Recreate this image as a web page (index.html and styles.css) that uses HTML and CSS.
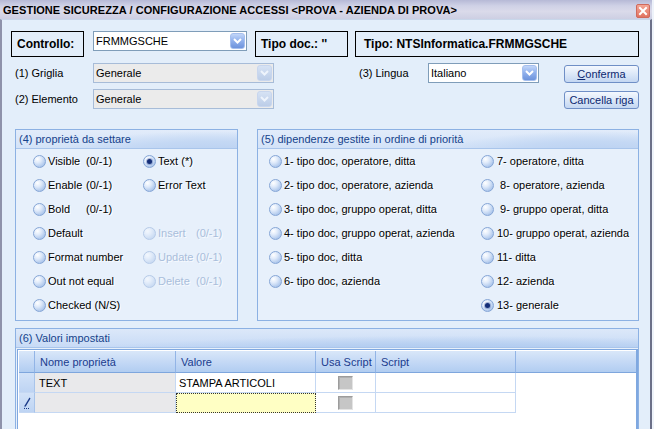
FILE: index.html
```html
<!DOCTYPE html>
<html>
<head>
<meta charset="utf-8">
<link rel="stylesheet" href="styles.css">
</head>
<body>
<div class="window">
  <div class="titlebar">
    <span class="title">GESTIONE SICUREZZA / CONFIGURAZIONE ACCESSI &lt;PROVA - AZIENDA DI PROVA&gt;</span>
    <span class="close">
      <svg width="14" height="14" viewBox="0 0 14 14">
        <defs><linearGradient id="cg" x1="0" y1="0" x2="0" y2="1"><stop offset="0" stop-color="#f4a898"/><stop offset="1" stop-color="#e0705e"/></linearGradient></defs>
        <rect x="0.5" y="0.5" width="13" height="13" rx="1.5" fill="url(#cg)" stroke="#d06a5c"/>
        <path d="M4 4 L10 10 M10 4 L4 10" stroke="#fff" stroke-width="2" stroke-linecap="square"/>
      </svg>
    </span>
  </div>
  <div class="frame">
    <div class="row-top">
      <div class="box box-ctrl">Controllo:</div>
      <div class="combo combo-ctrl"><span class="combo-text">FRMMGSCHE</span><span class="ddbtn"><svg width="9" height="6" viewBox="0 0 9 6"><path d="M1 1 L4.5 4.5 L8 1" fill="none" stroke="#fff" stroke-width="2"/></svg></span></div>
      <div class="box box-tipodoc">Tipo doc.: ''</div>
      <div class="box box-tipo">Tipo: NTSInformatica.FRMMGSCHE</div>
    </div>
    <div class="row-params">
      <div class="params-left">
        <div class="prow"><span class="plabel">(1) Griglia</span><div class="combo combo-dis"><span class="combo-text">Generale</span><span class="ddbtn dd-dis"><svg width="9" height="6" viewBox="0 0 9 6"><path d="M1 1 L4.5 4.5 L8 1" fill="none" stroke="#eef4fc" stroke-width="2"/></svg></span></div></div>
        <div class="prow"><span class="plabel">(2) Elemento</span><div class="combo combo-dis"><span class="combo-text">Generale</span><span class="ddbtn dd-dis"><svg width="9" height="6" viewBox="0 0 9 6"><path d="M1 1 L4.5 4.5 L8 1" fill="none" stroke="#eef4fc" stroke-width="2"/></svg></span></div></div>
      </div>
      <div class="params-lang">
        <span class="llabel">(3) Lingua</span>
        <div class="combo combo-lang"><span class="combo-text">Italiano</span><span class="ddbtn"><svg width="9" height="6" viewBox="0 0 9 6"><path d="M1 1 L4.5 4.5 L8 1" fill="none" stroke="#fff" stroke-width="2"/></svg></span></div>
      </div>
      <div class="params-buttons">
        <div class="btn"><u>C</u>onferma</div>
        <div class="btn">Cancella riga</div>
      </div>
    </div>
    <div class="groups">
      <div class="group group4">
        <div class="ghead">(4) proprietà da settare</div>
        <div class="gbody g4body">
          <div class="col col4a">
            <div class="ritem"><span class="radio"></span><span class="rname">Visible</span><span>(0/-1)</span></div>
            <div class="ritem"><span class="radio"></span><span class="rname">Enable</span><span>(0/-1)</span></div>
            <div class="ritem"><span class="radio"></span><span class="rname">Bold</span><span>(0/-1)</span></div>
            <div class="ritem"><span class="radio"></span><span>Default</span></div>
            <div class="ritem"><span class="radio"></span><span>Format number</span></div>
            <div class="ritem"><span class="radio"></span><span>Out not equal</span></div>
            <div class="ritem"><span class="radio"></span><span>Checked (N/S)</span></div>
          </div>
          <div class="col col4b">
            <div class="ritem"><span class="radio checked"></span><span>Text (*)</span></div>
            <div class="ritem"><span class="radio"></span><span>Error Text</span></div>
            <div class="ritem"></div>
            <div class="ritem dis"><span class="radio"></span><span class="rname">Insert</span><span>(0/-1)</span></div>
            <div class="ritem dis"><span class="radio"></span><span class="rname">Update</span><span>(0/-1)</span></div>
            <div class="ritem dis"><span class="radio"></span><span class="rname">Delete</span><span>(0/-1)</span></div>
          </div>
        </div>
      </div>
      <div class="group group5">
        <div class="ghead">(5) dipendenze gestite in ordine di priorità</div>
        <div class="gbody g5body">
          <div class="col col5a">
            <div class="ritem"><span class="radio"></span><span>1- tipo doc, operatore, ditta</span></div>
            <div class="ritem"><span class="radio"></span><span>2- tipo doc, operatore, azienda</span></div>
            <div class="ritem"><span class="radio"></span><span>3- tipo doc, gruppo operat, ditta</span></div>
            <div class="ritem"><span class="radio"></span><span>4- tipo doc, gruppo operat, azienda</span></div>
            <div class="ritem"><span class="radio"></span><span>5- tipo doc, ditta</span></div>
            <div class="ritem"><span class="radio"></span><span>6- tipo doc, azienda</span></div>
          </div>
          <div class="col col5b">
            <div class="ritem"><span class="radio"></span><span>7- operatore, ditta</span></div>
            <div class="ritem"><span class="radio"></span><span>&nbsp;8- operatore, azienda</span></div>
            <div class="ritem"><span class="radio"></span><span>&nbsp;9- gruppo operat, ditta</span></div>
            <div class="ritem"><span class="radio"></span><span>10- gruppo operat, azienda</span></div>
            <div class="ritem"><span class="radio"></span><span>11- ditta</span></div>
            <div class="ritem"><span class="radio"></span><span>12- azienda</span></div>
            <div class="ritem"><span class="radio checked"></span><span>13- generale</span></div>
          </div>
        </div>
      </div>
    </div>
    <div class="group group6">
      <div class="ghead ghead6">(6) Valori impostati</div>
      <div class="gridwrap">
        <div class="dgrid">
          <div class="hc sel"></div>
          <div class="hc">Nome proprietà</div>
          <div class="hc">Valore</div>
          <div class="hc">Usa Script</div>
          <div class="hc">Script</div>
          <div class="hc filler"></div>

          <div class="dc sel"></div>
          <div class="dc nome">TEXT</div>
          <div class="dc val">STAMPA ARTICOLI</div>
          <div class="dc chk"><span class="cbox"></span></div>
          <div class="dc"></div>
          <div class="dc empty"></div>

          <div class="dc sel"><svg width="8" height="12" viewBox="0 0 8 12"><path d="M6.5 0.5 L7.5 1.5 L3 9 L1.5 10.5 L1.8 8.2 Z" fill="#1a3a88"/><path d="M1 11.5 L7 11.5" stroke="#1a3a88" stroke-width="1" stroke-dasharray="1 1"/></svg></div>
          <div class="dc nome"></div>
          <div class="dc val editing"></div>
          <div class="dc chk"><span class="cbox"></span></div>
          <div class="dc"></div>
          <div class="dc empty"></div>
        </div>
      </div>
    </div>
  </div>
</div>
</body>
</html>
```
FILE: styles.css
```css
* { box-sizing: border-box; }
html, body { margin: 0; padding: 0; }
body {
  background: #eef3fa;
  font-family: "Liberation Sans", Arial, sans-serif;
  font-size: 11px;
  color: #000;
  width: 654px;
  height: 429px;
  overflow: hidden;
}
.window {
  width: 652px;
  height: 429px;
  display: flex;
  flex-direction: column;
  overflow: hidden;
}
.titlebar {
  height: 19px;
  flex: none;
  display: flex;
  align-items: center;
  justify-content: space-between;
  padding: 0 2px 0 2px;
  background: linear-gradient(to bottom, #b6b9d6 0%, #cfd1e6 30%, #dadaea 60%, #cdcfe3 100%);
}
.title {
  font-weight: bold;
  font-size: 11px;
  letter-spacing: 0.05px;
  color: #000;
  white-space: nowrap;
  padding-left: 1px;
}
.close { display: flex; margin-top: 3px; }
.frame {
  flex: 1;
  background: #e3eefa;
  border-left: 2px solid #8e92aa;
  border-right: 2px solid #6c7088;
  border-top: 1px solid #c8d6ea;
  padding: 11px 0 0 9px;
}
.row-top {
  display: flex;
  align-items: flex-start;
  height: 26px;
}
.box {
  border: 1px solid #000;
  height: 26px;
  display: flex;
  align-items: center;
  font-weight: bold;
  font-size: 12px;
  padding-left: 5px;
  white-space: nowrap;
}
.box-ctrl { width: 73px; }
.combo-ctrl { width: 154px; margin-left: 9px; }
.box-tipodoc { width: 93px; margin-left: 8px; }
.box-tipo { width: 284px; margin-left: 7px; padding-left: 8px; }

.combo {
  height: 20px;
  border: 1px solid #7f9db9;
  background: #fff;
  display: flex;
  align-items: center;
  justify-content: space-between;
  padding: 0 1px 0 2px;
}
.combo-text { white-space: nowrap; }
.ddbtn {
  width: 15px;
  height: 16px;
  border-radius: 3px;
  border: 1px solid #a5bfee;
  background: linear-gradient(to bottom, #c2d6f8 0%, #93b3ee 45%, #6d93dc 100%);
  display: flex;
  align-items: center;
  justify-content: center;
}
.combo-dis { width: 181px; background: #ebebeb; border-color: #a7bcd8; }
.dd-dis {
  background: linear-gradient(to bottom, #d6e2f4, #bccde8);
  border-color: #c8d6ee;
}

.row-params {
  display: flex;
  align-items: flex-start;
  margin-top: 6px;
}
.params-left { display: flex; flex-direction: column; gap: 6px; }
.prow { display: flex; align-items: center; padding-left: 4px; }
.plabel { width: 78px; }
.params-lang { display: flex; align-items: center; margin-left: 85px; }
.llabel { width: 69px; }
.combo-lang { width: 111px; }
.params-buttons {
  display: flex;
  flex-direction: column;
  gap: 8px;
  margin-left: 25px;
  margin-top: 2px;
}
.btn {
  width: 75px;
  height: 18px;
  border: 1px solid #6f8fc6;
  border-radius: 3px;
  background: linear-gradient(to bottom, #f4f8fe 0%, #dce8f8 50%, #c4d7f2 100%);
  color: #0c2870;
  display: flex;
  align-items: center;
  justify-content: center;
  font-size: 11px;
}

.groups {
  display: flex;
  margin-top: 20px;
  margin-left: 4px;
}
.group {
  border: 1px solid #8cb1e3;
  background: #e7f0fb;
  display: flex;
  flex-direction: column;
}
.group4 { width: 223px; height: 192px; }
.group5 { width: 382px; height: 192px; margin-left: 19px; }
.ghead {
  height: 19px;
  flex: none;
  border-bottom: 1px solid #a9c5eb;
  color: #15428b;
  padding-left: 3px;
  display: flex;
  align-items: center;
  font-size: 11px;
  background:
    radial-gradient(ellipse 160px 26px at 88% 150%, #b4cdf0 0%, #c4d8f4 60%, rgba(196,216,244,0) 100%),
    linear-gradient(to bottom, #e2ecfa 0%, #d3e3f8 100%);
}
.gbody { display: flex; }
.col { display: flex; flex-direction: column; }
.g4body { padding-left: 17px; }
.col4a { width: 110px; }
.g5body { padding-left: 11px; }
.col5a { width: 212px; }
.ritem {
  height: 24px;
  display: flex;
  align-items: center;
  white-space: nowrap;
  text-shadow: 1px 1px 0 rgba(255,255,255,0.9);
}
.rname { width: 38px; display: inline-block; }
.radio {
  width: 13px;
  height: 13px;
  border-radius: 50%;
  border: 1px solid #86a6d6;
  background: radial-gradient(circle at 32% 28%, #ffffff 0%, #dfeafa 35%, #a8c3ea 80%, #8fb0e2 100%);
  margin-right: 2px;
  flex: none;
  display: flex;
  align-items: center;
  justify-content: center;
}
.radio.checked::after {
  content: "";
  width: 5px;
  height: 5px;
  border-radius: 50%;
  background: #142e78;
  box-shadow: 0 0 0 1px rgba(40,70,150,0.35);
}
.col5b .radio { margin-right: 3px; }
.dis { color: #a9bedb; text-shadow: 1px 1px 0 rgba(255,255,255,0.7); }
.dis .radio { opacity: 0.5; }

.group6 { width: 624px; height: 110px; margin-top: 7px; margin-left: 4px; }
.ghead6 {
  height: 19px;
  background:
    radial-gradient(ellipse 420px 22px at 70% 160%, #a4c2ec 0%, #b6cff1 60%, rgba(182,207,241,0) 100%),
    linear-gradient(to bottom, #dce8f9 0%, #c8dbf6 100%);
}
.gridwrap {
  margin: 1px 0 0 1px;
  border: 1px solid #7fa8e0;
  border-right-width: 2px;
  padding: 1px 0 0 1px;
  background: #fff;
  flex: 1;
}
.dgrid {
  display: grid;
  grid-template-columns: 16px 141px 140px 60px 140px 1fr;
  grid-template-rows: 22px 20px 20px;
}
.hc {
  border-right: 1px solid #92b4e6;
  border-bottom: 1px solid #7ea6dd;
  background: linear-gradient(to bottom, #d9e7f9 0%, #c3d8f5 55%, #b1cdf1 100%);
  color: #1b3c8e;
  display: flex;
  align-items: center;
  padding-left: 5px;
  white-space: nowrap;
}
.hc.filler { border-right: none; }
.dc {
  border-right: 1px solid #c5d8f3;
  border-bottom: 1px solid #c5d8f3;
  display: flex;
  align-items: center;
  padding-left: 3px;
  white-space: nowrap;
  background: #fff;
}
.dc.sel {
  background: linear-gradient(to bottom, #d2e2f8, #bed4f3);
  border-right-color: #a8c4ea;
  padding-left: 4px;
}
.dc.nome { background: #e9e9eb; padding-left: 4px; }
.dc.val { padding-left: 3px; }
.dc.editing {
  background: #ffffc4;
  border: 1px dotted #333;
}
.dc.chk { justify-content: center; padding-left: 0; }
.cbox {
  width: 15px;
  height: 14px;
  border: 1px solid #9c9c9c;
  border-right-color: #e4e4e4;
  border-bottom-color: #e4e4e4;
  background: #c6c6c6;
  box-shadow: inset 1px 1px 0 #b0b0b0;
}
.dc.empty { border: none; background: #fff; }
```
